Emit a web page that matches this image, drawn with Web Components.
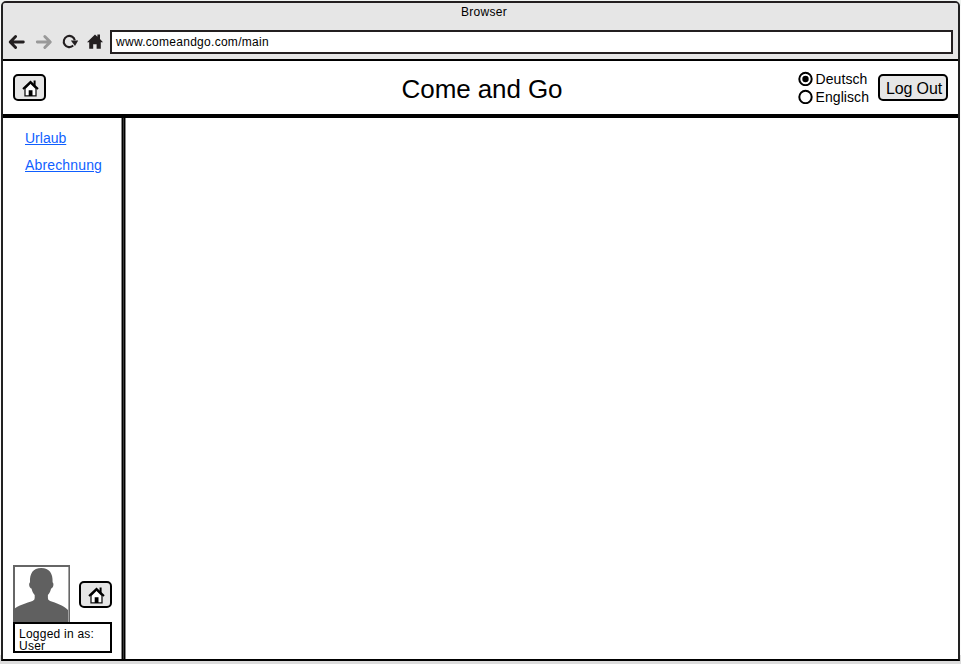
<!DOCTYPE html>
<html lang="de"><head><meta charset="utf-8"><title>Come and Go</title>
<style>
html,body{margin:0;height:100%;overflow:hidden}
body{background:linear-gradient(#f0f3f1 0 6px,#fafafa 6px 655px,#dcdcdc 655px);font-family:"Liberation Sans",Arial,sans-serif;color:#000;font-size:12px}
</style></head><body>
<browser-window></browser-window>
<script>
const define=(name,html)=>customElements.define(name,class extends HTMLElement{
  constructor(){super();this.attachShadow({mode:'open'}).innerHTML=html;}
});

define('nav-icons',`<style>:host{display:block;width:110px;height:24px}svg{display:block}</style>
<svg width="110" height="24" viewBox="0 30 110 24" fill="none">
<g stroke-width="2.9" stroke-linecap="round" stroke-linejoin="round">
<path stroke="#231f20" d="M23.3 42H10.5M15.6 36.5 10.2 42l5.4 5.5"/>
<path stroke="#999" d="M37.3 42H50M44.8 36.5 50.3 42l-5.5 5.5"/></g>
<path stroke="#231f20" stroke-width="2.1" d="M73.2 45.6A5.6 5.6 0 1 1 74.8 40.2"/>
<path fill="#231f20" d="M70.8 40.6h7.4L75 46z"/>
<path fill="#231f20" d="M87 42.2 95 34.5l2.4 2.2v-2.2h2.6v4.6l3 3.1h-2.2v6.6h-4.2v-4.6h-3.4v4.6h-4v-6.6z"/>
</svg>`);

define('home-button',`<style>
:host{display:block;flex:none;width:33px;height:27px}
button{box-sizing:border-box;display:grid;place-items:center;width:33px;height:27px;padding:1px 0 0 2px;border:2px solid #000;border-radius:5px;background:#e6e6e6}
svg{display:block}</style>
<button aria-label="Home"><svg width="17" height="17" viewBox="0 0 17 17">
<path fill="#fff" stroke="#111" stroke-width="1.3" d="M3 8.5v7.3h11V8.5L8.5 3z"/>
<path fill="none" stroke="#000" stroke-width="2" d="M1 9 8.5 1.9 16 9"/>
<path fill="#000" d="M11.6.6h2v5.6l-2-2zM6.7 10.3h3.8v5.6H6.7z"/></svg></button>`);

define('text-button',`<style>
:host{display:block;flex:none}
button{box-sizing:border-box;width:70px;height:27px;padding:2px 0 0 2px;border:2px solid #000;border-radius:5px;background:#e6e6e6;font:16px "Liberation Sans",Arial,sans-serif;letter-spacing:-.1px;white-space:nowrap}</style><button><slot></slot></button>`);

define('radio-option',`<style>
:host{display:flex;align-items:center;gap:3px;height:18px;font-size:14px;line-height:18px;letter-spacing:.06px}
svg{display:block;flex:none}circle.dot{display:none}:host([checked]) circle.dot{display:block}</style>
<svg width="15" height="15"><circle cx="7.5" cy="8" r="6.2" fill="#fff" stroke="#000" stroke-width="2"/><circle class="dot" cx="7.5" cy="8" r="3.2"/></svg><span><slot></slot></span>`);

define('app-header',`<style>
:host{box-sizing:border-box;display:grid;grid-template-columns:1fr auto 1fr;height:57px;border-bottom:4px solid #000;align-items:center;padding:0 10px 0 10px}
h1{margin:0;font-size:26px;font-weight:400;line-height:30px;padding:3px 0 0 3px;letter-spacing:-.1px}
.right{display:flex;justify-content:flex-end;align-items:center;gap:9px}</style>
<home-button></home-button><h1>Come and Go</h1>
<div class="right"><div><radio-option checked>Deutsch</radio-option><radio-option>Englisch</radio-option></div><text-button>Log Out</text-button></div>`);

define('user-card',`<style>
:host{display:block}.row{display:flex;gap:9px;align-items:center}
.row home-button{margin-top:2px}
.avatar{display:block;flex:none}
.login{box-sizing:border-box;width:99px;height:31px;border:2px solid #000;background:#fff;padding:4px 0 0 4px;line-height:12px;letter-spacing:.24px;white-space:nowrap}</style>
<div class="row"><svg class="avatar" width="57" height="57" viewBox="0 0 57 57"><path fill="#fff" stroke="#666" stroke-width="2" d="M1 58V1h55.4v57"/>
<path fill="#606060" d="M0 57V45C5 40 14 38 19.5 36q2.4-1 2.2-3V30c-1.8-1.6-2.6-4-3.2-6.4-2.2-.8-3.2-5-1.5-6.4C16.6 8.500 20 3 28.200 3s11.800 5.500 11.400 14.200c1.700 1.400.7 5.600-1.500 6.400-.6 2.400-1.400 4.800-3.200 6.400v3q-.2 2 2.200 3C43 38 50 40 55 45v12z"/></svg><home-button></home-button></div>
<div class="login">Logged in as:<br>User</div>`);

define('side-nav',`<style>
:host{display:flex;width:123px}
.content{box-sizing:border-box;flex:1;display:flex;flex-direction:column;padding:11px 0 6px 10px;justify-content:space-between}
.rule{flex:none;width:5px;background:linear-gradient(90deg,#888 0 1px,#000 1px 2px,#383838 2px 3px,#000 3px 4px,#888 4px)}
nav{display:flex;flex-direction:column;align-items:flex-start;gap:9px;padding-left:12px}
a{color:#0f5fff;font-size:14px;line-height:18px;text-decoration:underline}
a+a{letter-spacing:.15px}</style>
<div class="content"><nav><a href="#">Urlaub</a><a href="#">Abrechnung</a></nav><user-card></user-card></div><div class="rule"></div>`);

define('browser-window',`<style>
:host{box-sizing:border-box;display:flex;flex-direction:column;width:959px;height:660px;margin:1px 1px 0;border:2px solid #000;border-top-color:#231f20;border-left-color:#222;border-right-color:#222;border-radius:5px 5px 0 0;background:#fff;overflow:hidden}
.chrome{box-sizing:border-box;height:58px;background:#e6e6e6;border-bottom:2px solid #000}
.title{height:27px;line-height:18px;text-align:center;letter-spacing:.3px;padding-left:7px}
.bar{display:flex;margin-left:-3px;padding-right:5px}
.url{box-sizing:border-box;flex:1;height:24px;border:2px solid #231f20;background:#fff;padding-left:4px;line-height:20px;letter-spacing:.28px}
main{display:flex;flex:1;min-height:0}section{flex:1}</style>
<div class="chrome"><div class="title">Browser</div><div class="bar"><nav-icons></nav-icons><div class="url">www.comeandgo.com/main</div></div></div>
<app-header></app-header><main><side-nav></side-nav><section></section></main>`);
</script></body></html>
